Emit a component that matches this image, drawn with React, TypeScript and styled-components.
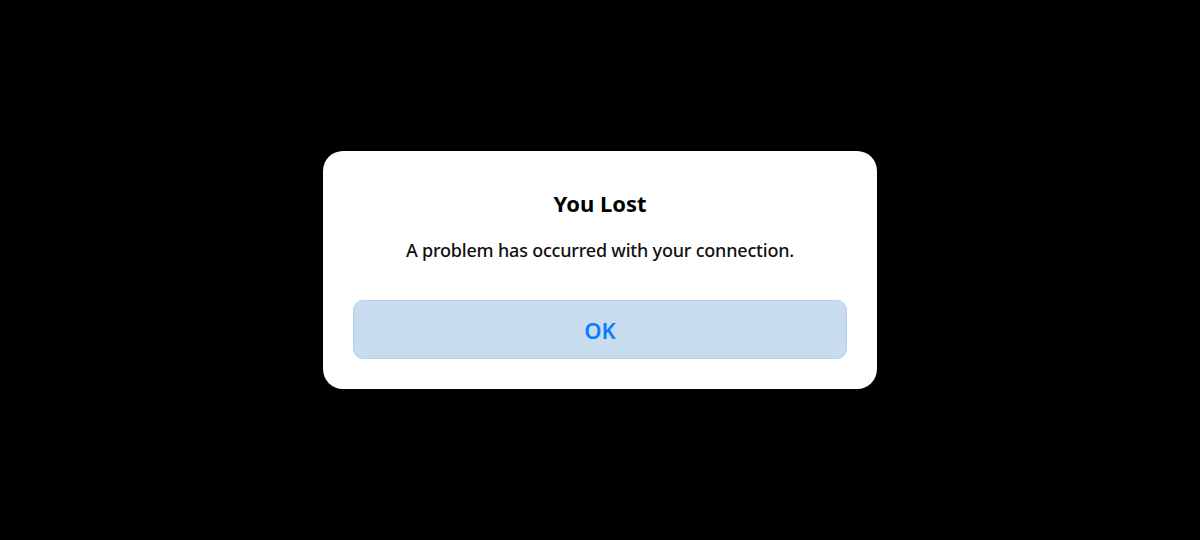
import styled, { createGlobalStyle } from 'styled-components';

const Global = createGlobalStyle`
  html, body {
    margin: 0;
    height: 100%;
    background: #000;
  }
  #root {
    height: 100%;
  }
`;

function App() {
  return (
    <>
      <Global />
      <Screen>
        <Dialog role="alertdialog">
          <Title>You Lost</Title>
          <Message>A problem has occurred with your connection.</Message>
          <OkButton type="button">OK</OkButton>
        </Dialog>
      </Screen>
    </>
  );
}

export default App;

const Screen = styled.div`
  height: 100vh;
  display: flex;
  align-items: center;
  justify-content: center;
  background: #000;
  font-family: "Noto Sans", "Liberation Sans", sans-serif;
`;

const Dialog = styled.div`
  width: 554px;
  height: 238px;
  box-sizing: border-box;
  background: #fff;
  border-radius: 20px;
  padding: 36px 30px 30px;
  display: flex;
  flex-direction: column;
  align-items: center;
`;

const Title = styled.h2`
  margin: 0;
  font-size: 22px;
  font-weight: 700;
  line-height: 32px;
  color: #000;
`;

const Message = styled.p`
  margin: 18px 0 0;
  font-size: 18px;
  font-weight: 500;
  line-height: 26px;
  letter-spacing: -0.2px;
  color: #111;
`;

const OkButton = styled.button`
  margin-top: auto;
  width: 100%;
  height: 59px;
  border: 1px solid #b9cfe6;
  border-radius: 10px;
  background: #c8dcf0;
  color: #0a7cff;
  font-family: inherit;
  font-size: 22px;
  font-weight: 600;
  cursor: pointer;
`;
